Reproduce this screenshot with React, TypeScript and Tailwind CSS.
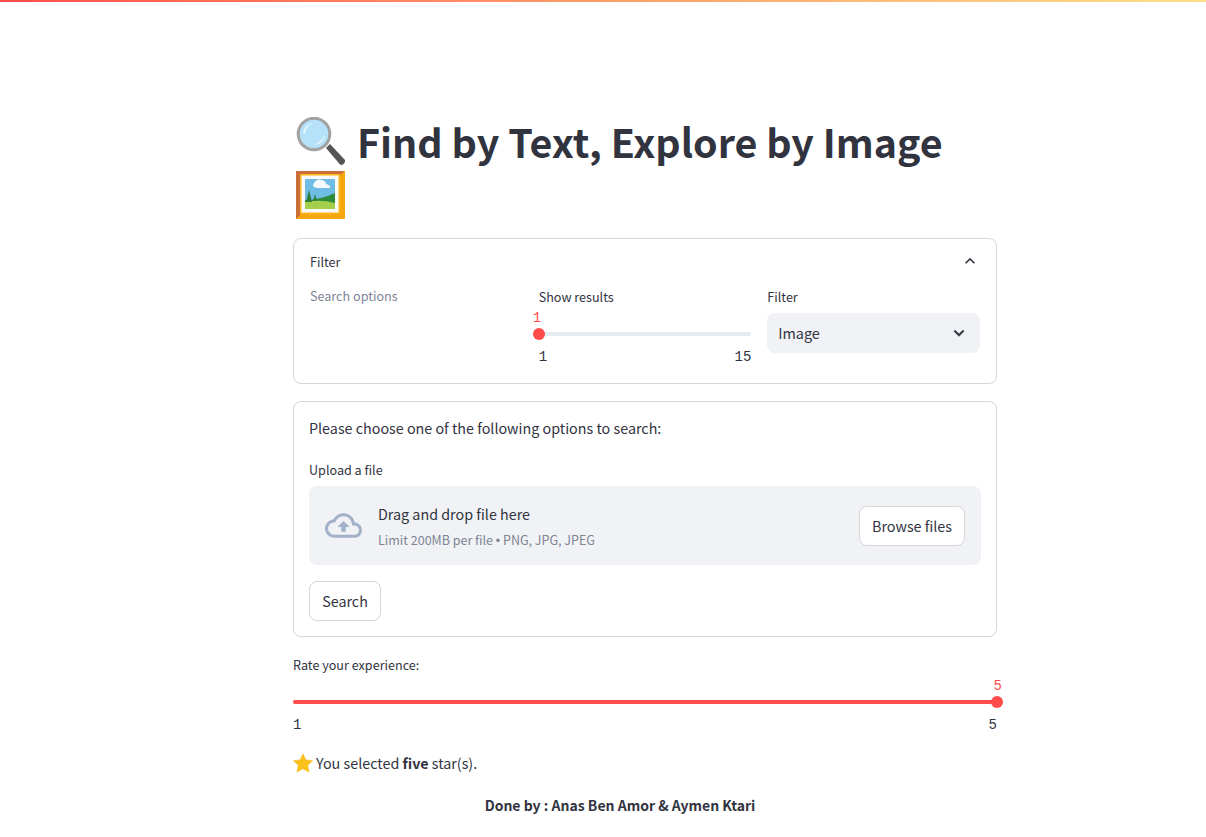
import React from 'react';

const sans = '[font-family:"Noto_Sans_CJK_SC","Source_Sans_Pro",sans-serif]';
const mono = '[font-family:"Liberation_Mono",monospace]';

const MagnifierEmoji = () => (
  <svg className="w-[50px] h-[50px] shrink-0 ml-0.5" viewBox="0 0 50 50" aria-hidden="true">
    <path d="M31 31 L35 27 L50 43 Q50.5 45 48.5 47 Q46.5 48.5 45 47.5 Z" fill="#555" />
    <circle cx="19" cy="17" r="15.8" fill="#b5e2f8" stroke="#a2a2a2" strokeWidth="3" />
    <path d="M8 16 A11 11 0 0 1 18 6 Q11 9 10 17 Z" fill="#e4f6fe" />
    <path d="M19 28 A11 11 0 0 0 30 18 Q26 25 19 28 Z" fill="#e4f6fe" />
  </svg>
);

const PictureEmoji = () => (
  <svg className="block w-[50px] h-[50px] ml-0.5" viewBox="0 0 50 50" aria-hidden="true">
    <rect x="1" y="2" width="49" height="48" fill="#f5a70f" />
    <path d="M1 2 H50 L45 6 H6 V45 L1 50 Z" fill="#cb6f38" />
    <rect x="5" y="5" width="40" height="40" fill="#fbb81c" />
    <rect x="6.5" y="6.5" width="37" height="37" fill="#fafafa" />
    <rect x="10" y="10" width="30" height="30" fill="#6fbce4" />
    <path d="M10 31 Q25 31 40 24 V40 H10 Z" fill="#2f8a3a" />
    <path d="M10 33 Q25 30 40 34 V40 H10 Z" fill="#a5cf4a" />
    <path d="M11 33 L14 21 L17 33 Z M18 32 L20 25 L22 32 Z" fill="#2f7d3a" />
    <path d="M19 14 Q22 9 27 11 Q31 12 31 15 Q36 16 35 19 H22 Q16 18 19 14 Z" fill="#f4f8fb" />
  </svg>
);

const StarEmoji = () => (
  <svg className="w-5 h-5 shrink-0" viewBox="0 0 20 20" aria-hidden="true">
    <path d="M10 .8 L12.9 6.9 L19.6 7.7 L14.7 12.3 L16 19 L10 15.7 L4 19 L5.3 12.3 L.4 7.7 L7.1 6.9 Z" fill="#fcc21b" stroke="#f5b013" strokeWidth="0.5" strokeLinejoin="round" />
  </svg>
);

const SliderBlock: React.FC<{ value: string; min: string; max: string; percent: number }> = ({ value, min, max, percent }) => {
  const isEnd = percent === 100;
  return (
    <div>
      <div className={`relative h-10 ${mono}`}>
        <div className="absolute left-0 right-0 top-[25px] h-1 rounded-full bg-[#e6eaf1]" />
        <div className="absolute left-0 top-[25px] h-1 rounded-full bg-[#ff4b4b]" style={{ width: `${percent}%` }} />
        <div
          className="absolute top-[21px] w-3 h-3 rounded-full bg-[#ff4b4b]"
          style={isEnd ? { right: -6 } : { left: -6 }}
        />
        <span
          className="absolute top-px text-[14px] leading-[20px] text-[#ff4b4b]"
          style={isEnd ? { right: -5 } : { left: -6 }}
        >
          {value}
        </span>
      </div>
      <div className={`flex justify-between text-[14px] leading-[20px] text-[#31333f] ${mono}`}>
        <span>{min}</span>
        <span>{max}</span>
      </div>
    </div>
  );
};

export default function App() {
  return (
    <div className={`relative min-h-[837px] bg-white text-[#31333f] ${sans}`}>
      <div className="h-0.5 bg-gradient-to-r from-[#ff4b4b] to-[#ffe08a]" />
      <main className="w-[704px] ml-[293px] pt-[114px]">
        <h1 className="text-[39.4px] leading-[52.8px] font-bold pb-4 text-[#31333f]">
          <span className="flex items-center gap-3 h-[52.8px]">
            <MagnifierEmoji />
            <span className="pb-0.5">Find by Text, Explore by Image</span>
          </span>
          <span className="block h-[52.8px]">
            <PictureEmoji />
          </span>
        </h1>

        {/* Filter expander */}
        <section className="h-[146px] rounded-lg border border-[#d6d6d9] px-4">
          <div className="flex items-center justify-between h-[46px]">
            <span className="text-[12.6px] leading-[20px]">Filter</span>
            <svg className="w-5 h-5 mb-[2px] text-[#31333f]" viewBox="0 0 24 24" fill="currentColor" aria-hidden="true">
              <path d="M12 8l-6 6 1.41 1.41L12 10.83l4.59 4.58L18 14z" />
            </svg>
          </div>
          <div className="grid grid-cols-3 gap-4">
            <div className="text-[12.6px] leading-[20px] text-[#808495] pt-px">Search options</div>
            <div className="pt-[2px]">
              <div className="text-[12.6px] leading-[20px]">Show results</div>
              <SliderBlock value="1" min="1" max="15" percent={0} />
            </div>
            <div className="pt-[2px]">
              <div className="text-[12.6px] leading-[20px] pb-1.5">Filter</div>
              <div className="flex items-center justify-between h-10 rounded-lg bg-[#f0f2f6] pl-[11px] pr-[11px]">
                <span className="text-[14.4px] leading-[20px]">Image</span>
                <svg className="w-5 h-5 text-[#31333f]" viewBox="0 0 24 24" fill="currentColor" stroke="currentColor" strokeWidth="0.8" aria-hidden="true">
                  <path d="M16.59 8.59L12 13.17 7.41 8.59 6 10l6 6 6-6z" />
                </svg>
              </div>
            </div>
          </div>
        </section>

        {/* Search form */}
        <section className="mt-[17px] h-[236px] rounded-lg border border-[#d6d6d9] px-[15px] pt-3.5">
          <p className="text-[14.32px] leading-[24px]">Please choose one of the following options to search:</p>
          <div className="mt-[20px] text-[12.6px] leading-[20px]">Upload a file</div>
          <div className="mt-[6px] flex items-center justify-between h-[79px] rounded-lg bg-[#f0f2f6] px-4">
            <div className="flex items-center gap-4">
              <svg className="w-[37px] h-[37px] text-[#a3b0c9]" viewBox="0 0 24 24" fill="currentColor" aria-hidden="true">
                <path d="M19.35 10.04C18.67 6.59 15.64 4 12 4 9.11 4 6.6 5.64 5.35 8.04 2.34 8.36 0 10.91 0 14c0 3.31 2.69 6 6 6h13c2.76 0 5-2.24 5-5 0-2.64-2.05-4.78-4.65-4.96zM19 18H6c-2.21 0-4-1.79-4-4 0-2.05 1.53-3.76 3.56-3.97l1.07-.11.5-.95C8.08 7.14 9.94 6 12 6c2.62 0 4.88 1.86 5.39 4.43l.3 1.5 1.53.11c1.56.1 2.78 1.41 2.78 2.96 0 1.65-1.35 3-3 3zM8 13h2.55v3h2.9v-3H16l-4-4z" />
              </svg>
              <div className="pt-[3px]">
                <div className="text-[14.32px] leading-[24px]">Drag and drop file here</div>
                <div className="text-[12.5px] leading-[20px] mt-1 text-[#808495]">
                  Limit 200MB per file <span className='[font-family:"Liberation_Sans",sans-serif]'>•</span> PNG, JPG, JPEG
                </div>
              </div>
            </div>
            <button className="mt-px h-10 w-[106px] rounded-lg border border-[#d6d6d9] bg-white text-[14.32px]">Browse files</button>
          </div>
          <button className="mt-4 h-10 w-[72px] rounded-lg border border-[#d6d6d9] bg-white text-[14.32px]">Search</button>
        </section>

        {/* Rating */}
        <div className="mt-[18px] text-[12.6px] leading-[20px]">Rate your experience:</div>
        <SliderBlock value="5" min="1" max="5" percent={100} />
        <p className="mt-4 flex items-center gap-[3px] text-[14.32px] leading-[24px]">
          <StarEmoji />
          <span>
            You selected <strong className="font-semibold">five</strong> star(s).
          </span>
        </p>
        <p className="mt-[18px] w-[654px] text-center text-[14px] leading-[24px] font-semibold">Done by : Anas Ben Amor &amp; Aymen Ktari</p>
      </main>
    </div>
  );
}
